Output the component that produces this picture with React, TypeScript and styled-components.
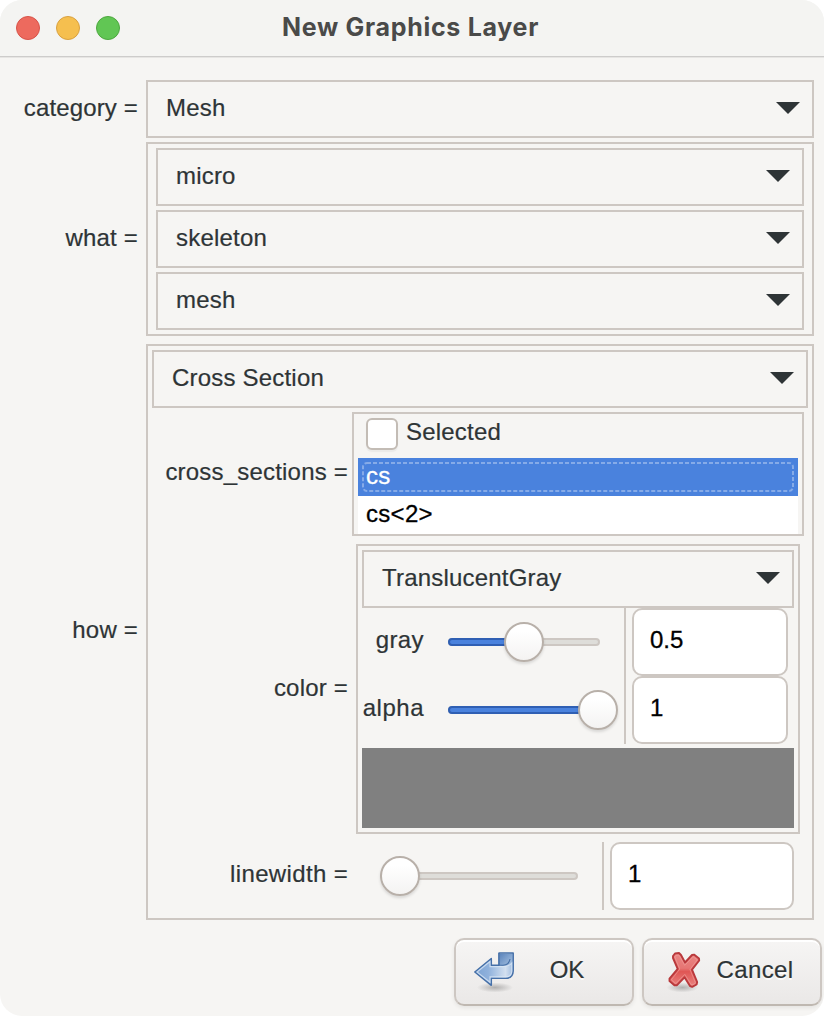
import React from "react";
import styled, { createGlobalStyle } from "styled-components";

const GlobalStyle = createGlobalStyle`
  html, body { margin: 0; background: #fff; }
  * { box-sizing: border-box; }
`;

const line = "#cdc7c2";

const Dialog = styled.div`
  width: 824px;
  height: 1016px;
  border-radius: 22px;
  overflow: hidden;
  background: #f6f5f3;
  display: flex;
  flex-direction: column;
  font: 24px/28px "Liberation Sans", Arial, sans-serif;
  color: #2e3436;
  white-space: nowrap;
`;

const TitleBar = styled.header`
  height: 58px;
  flex: none;
  display: grid;
  grid-template-columns: 238px 1fr 243px;
  align-items: center;
  padding: 0 14px 2px 16px;
  background: #f4f4f2;
  border-bottom: 1px solid #e6e5e3;
  box-shadow: inset 0 -1px 0 #cdcccb;
`;

const Lights = styled.div`
  display: flex;
  gap: 16px;
`;

const Light = styled.span<{ $fill: string; $edge: string }>`
  width: 24px;
  height: 24px;
  border-radius: 50%;
  background: ${(p) => p.$fill};
  border: 1px solid ${(p) => p.$edge};
`;

const Title = styled.h1`
  margin: 0;
  padding-bottom: 1px;
  font: 700 25px/30px Inter, "Liberation Sans", sans-serif;
  letter-spacing: 0.7px;
  color: #4a4a49;
  text-align: center;
`;

const Form = styled.main`
  padding: 22px 10px 0 0;
  display: grid;
  grid-template-columns: 138px 1fr;
  column-gap: 8px;
  align-items: center;
`;

/* $shift nudges the text off the centre line of its row, in pixels. */
const Text = styled.span<{ $ls?: number; $shift?: number }>`
  text-align: right;
  letter-spacing: ${(p) => p.$ls ?? 0.2}px;
  -webkit-text-stroke: 0.2px currentColor;
  padding-top: ${(p) => Math.max(0, (p.$shift ?? -1) * 2)}px;
  padding-bottom: ${(p) => Math.max(0, (p.$shift ?? -1) * -2)}px;
`;

const Frame = styled.section<{ $pad: string; $top: number }>`
  border: 2px solid ${line};
  padding: ${(p) => p.$pad};
  margin-top: ${(p) => p.$top}px;
`;

const Select = styled.div`
  height: 58px;
  border: 2px solid ${line};
  padding: 0 12px 0 18px;
  display: flex;
  align-items: center;
  justify-content: space-between;
`;

const ArrowSvg = styled.svg`
  margin-bottom: 2px;
`;

const Stack = styled.div`
  display: flex;
  flex-direction: column;
  gap: 4px;
`;

const HowGrid = styled.div`
  display: grid;
  grid-template-columns: 196px 1fr;
  column-gap: 4px;
  align-items: center;
`;

const ListFrame = styled.div`
  height: 124px;
  margin: 4px 4px 0 0;
  border: 2px solid ${line};
  padding: 0 4px;
`;

const CheckRow = styled.div`
  height: 44px;
  display: flex;
  gap: 8px;
  padding: 4px 8px;
`;

const CheckBox = styled.span`
  width: 32px;
  height: 32px;
  border: 2px solid #c3bcb5;
  border-radius: 6px;
  background: #fff;
  box-shadow: 0 2px 1px #ebeae8;
`;

const Item = styled.div<{ $active?: boolean }>`
  height: 38px;
  line-height: 36px;
  padding: 0 8px;
  position: relative;
  letter-spacing: 0.3px;
  background: ${(p) => (p.$active ? "#4a82dd" : "#fff")};
  color: ${(p) => (p.$active ? "#fff" : "#000")};
  -webkit-text-stroke: 0.3px currentColor;
`;

const FocusRing = styled.svg`
  position: absolute;
  inset: 0;
  width: 100%;
  height: 100%;
`;

const ColorFrame = styled.div`
  height: 290px;
  margin: 8px 8px 0 4px;
  border: 2px solid ${line};
  padding: 4px;
`;

const Channels = styled.div`
  height: 136px;
  display: grid;
  grid-template-columns: 62px 202px 1fr;
  grid-template-rows: 68px 68px;
  align-items: center;
`;

const SliderCell = styled.div<{ $pad: string }>`
  height: 68px;
  border-right: 2px solid ${line};
  padding: ${(p) => p.$pad};
  display: flex;
  align-items: center;
`;

const Entry = styled.div`
  height: 68px;
  border: 2px solid ${line};
  border-radius: 10px;
  background: #fff;
  color: #000;
  padding: 0 16px 4px;
  display: flex;
  align-items: center;
  -webkit-text-stroke: 0.3px currentColor;
`;

const ChannelEntry = styled(Entry)`
  width: 156px;
  margin-left: 6px;
`;

const Track = styled.div`
  position: relative;
  flex: 1;
  height: 8px;
  border: 2px solid ${line};
  border-radius: 4px;
  background: #deddd9;
`;

const Fill = styled.div`
  position: absolute;
  left: -2px;
  top: -2px;
  height: 8px;
  border: 2px solid #2f5fb3;
  border-radius: 4px;
  background: #4a82dd;
`;

const Knob = styled.span`
  position: absolute;
  top: -18px;
  width: 40px;
  height: 40px;
  border: 2px solid #b8b0a9;
  border-radius: 50%;
  background: linear-gradient(#fff 20%, #f4f3f2);
  box-shadow: 0 2px 3px rgba(0, 0, 0, 0.12);
`;

const Swatch = styled.div`
  height: 80px;
  margin-top: 4px;
  background: #808080;
`;

const WidthRow = styled.div`
  display: grid;
  grid-template-columns: 252px 184px;
  column-gap: 6px;
  margin-top: 8px;
`;

const Actions = styled.footer`
  display: flex;
  justify-content: flex-end;
  gap: 8px;
  padding: 18px 2px 0 0;
`;

const Button = styled.button`
  width: 180px;
  height: 68px;
  border: 2px solid ${line};
  border-bottom-color: #bfb8b1;
  border-radius: 10px;
  background: linear-gradient(#f6f5f4, #eae8e7);
  box-shadow: inset 0 2px 0 #fff, 0 2px 4px rgba(0, 0, 0, 0.07);
  font: inherit;
  color: inherit;
  padding: 0 18px;
  display: grid;
  grid-template-columns: 40px 100px;
  align-items: center;
`;

const Caption = styled.span<{ $ls: number }>`
  padding: 0 0 4px 6px;
  text-align: center;
  letter-spacing: ${(p) => p.$ls}px;
  -webkit-text-stroke: 0.2px currentColor;
  text-shadow: 0 2px 0 rgba(255, 255, 255, 0.8);
`;

const Arrow = () => (
  <ArrowSvg width="24" height="12" viewBox="0 0 24 12">
    <path d="M0 0H24L12 12Z" fill="#2e3436" />
  </ArrowSvg>
);

const Dropdown = ({ children }: { children: string }) => (
  <Select>
    <Text>{children}</Text>
    <Arrow />
  </Select>
);

const Slider = ({ value, min }: { value: number; min: number }) => (
  <Track>
    {value > min && <Fill style={{ width: value }} />}
    <Knob style={{ left: value - 22 }} />
  </Track>
);

const ReturnIcon = () => (
  <svg width="40" height="42" viewBox="0 0 40 42">
    <defs>
      <linearGradient id="blue" x1="0" x2="1">
        <stop offset="0" stopColor="#7da3d3" />
        <stop offset=".35" stopColor="#8fb1dc" />
        <stop offset=".8" stopColor="#d3e0f0" />
        <stop offset="1" stopColor="#9dbadf" />
      </linearGradient>
      <linearGradient id="fold" x1="0" x2="1" y1="0" y2="1">
        <stop offset="0" stopColor="#5d86bd" />
        <stop offset="1" stopColor="#a9c3e2" />
      </linearGradient>
      <radialGradient id="shade">
        <stop offset="0" stopColor="#000" stopOpacity=".25" />
        <stop offset="1" stopColor="#000" stopOpacity="0" />
      </radialGradient>
    </defs>
    <ellipse cx="21" cy="36.500" rx="18" ry="5" fill="url(#shade)" />
    <path d="M25 2H39.200V20Q39 27.300 31.500 27.300H17.300V34.300L.8 21L17.300 7.500V14.200H25Z" fill="url(#blue)" stroke="#4670a8" strokeWidth="1.500" strokeLinejoin="round" />
    <path d="M26 3H38V11Q35.500 15 29 15L26 14Z" fill="url(#fold)" />
    <path d="M25 2V14.200H29Q35 14 36 8" fill="none" stroke="#4670a8" strokeWidth="1.100" />
    <path d="M16 10.500V15.600H29Q35 15.500 37.800 12V20Q37.500 25.900 31.500 25.900H16V31.300L3 21Z" fill="none" stroke="#dce8f5" strokeWidth="1.100" opacity=".75" />
  </svg>
);

const CrossIcon = () => (
  <svg width="40" height="42" viewBox="0 0 40 42">
    <defs>
      <linearGradient id="red" x1="0" y1="0" x2="0" y2="1">
        <stop offset="0" stopColor="#ea8886" />
        <stop offset=".45" stopColor="#e67573" />
        <stop offset=".55" stopColor="#e05654" />
        <stop offset="1" stopColor="#e98582" />
      </linearGradient>
    </defs>
    <ellipse cx="20.500" cy="36.500" rx="16" ry="5" fill="url(#shade)" />
    <path d="M11 5L13 2.500L17 2L19 4L23 11.500L30 4L32 3.600L37 7.500L37.200 9.500L30 18.700L35.200 31L34.600 33.500L30.200 35.800L28 35L22.500 26.300L15 34.200L12.400 34.200L7.500 30L7.500 27.600L15.700 17.800L11 7Z" fill="url(#red)" stroke="#b9393c" strokeWidth="1.900" strokeLinejoin="round" />
    <path d="M12.800 6L14 4.400L16.500 4L17.500 5L22.700 14.300L31 5.700L35.200 8.800L28 18.500L33.300 31.500L33 32.500L30 34L29 33.400L22.800 23.300L13.800 32.500L9.400 28.800L17.800 18Z" fill="none" stroke="#f2a5a2" strokeWidth=".9" opacity=".6" />
  </svg>
);

export default function App() {
  return (
    <Dialog>
      <GlobalStyle />
      <TitleBar>
        <Lights>
          <Light $fill="#ed6a5e" $edge="#d75349" />
          <Light $fill="#f5bf4f" $edge="#d8a040" />
          <Light $fill="#61c654" $edge="#4da73f" />
        </Lights>
        <Title>New Graphics Layer</Title>
      </TitleBar>
      <Form>
        <Text $ls={0.15}>category =</Text>
        <Dropdown>Mesh</Dropdown>
        <Text $shift={1}>what =</Text>
        <Frame $pad="4px 8px" $top={4}>
          <Stack>
            <Dropdown>micro</Dropdown>
            <Dropdown>skeleton</Dropdown>
            <Dropdown>mesh</Dropdown>
          </Stack>
        </Frame>
        <Text $shift={2}>how =</Text>
        <Frame $pad="4px 4px 8px" $top={8}>
          <Dropdown>Cross Section</Dropdown>
          <HowGrid>
            <Text $shift={0}>cross_sections =</Text>
            <ListFrame>
              <CheckRow>
                <CheckBox />
                <Text>Selected</Text>
              </CheckRow>
              <Item $active>
                cs
                <FocusRing>
                  <rect x="5" y="5" width="430" height="28" rx="4" fill="none" stroke="#86abe8" strokeWidth="2" strokeDasharray="4 2" />
                </FocusRing>
              </Item>
              <Item>{"cs<2>"}</Item>
            </ListFrame>
            <Text $shift={3}>color =</Text>
            <ColorFrame>
              <Dropdown>TranslucentGray</Dropdown>
              <Channels>
                <Text $shift={-2} $ls={0.4}>gray</Text>
                <SliderCell $pad="0 24px">
                  <Slider value={76} min={0} />
                </SliderCell>
                <ChannelEntry>0.5</ChannelEntry>
                <Text $shift={-2} $ls={0.5}>alpha</Text>
                <SliderCell $pad="0 24px">
                  <Slider value={150} min={0} />
                </SliderCell>
                <ChannelEntry>1</ChannelEntry>
              </Channels>
              <Swatch />
            </ColorFrame>
            <Text $shift={2} $ls={0.35}>linewidth =</Text>
            <WidthRow>
              <SliderCell $pad="0 24px 0 28px">
                <Slider value={20} min={20} />
              </SliderCell>
              <Entry>1</Entry>
            </WidthRow>
          </HowGrid>
        </Frame>
      </Form>
      <Actions>
        <Button>
          <ReturnIcon />
          <Caption $ls={0}>OK</Caption>
        </Button>
        <Button>
          <CrossIcon />
          <Caption $ls={0.4}>Cancel</Caption>
        </Button>
      </Actions>
    </Dialog>
  );
}
